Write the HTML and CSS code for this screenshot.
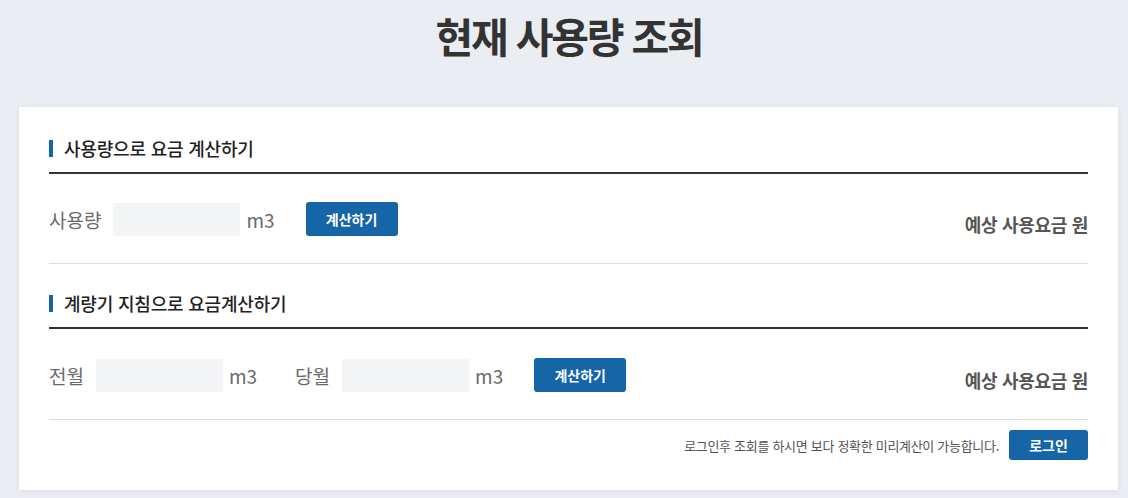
FILE: index.html
```html
<!DOCTYPE html>
<html lang="ko">
<head>
<meta charset="utf-8">
<title>현재 사용량 조회</title>
<link rel="stylesheet" href="styles.css">
</head>
<body>
<h1 class="page-title">현재 사용량 조회</h1>
<div class="card">
  <section class="calc">
    <h2 class="sec-title">사용량으로 요금 계산하기</h2>
    <div class="calc-row">
      <span class="label">사용량</span>
      <span class="field"></span>
      <span class="unit">m3</span>
      <button class="btn">계산하기</button>
      <span class="result">예상 사용요금 원</span>
    </div>
  </section>
  <section class="calc">
    <h2 class="sec-title">계량기 지침으로 요금계산하기</h2>
    <div class="calc-row">
      <span class="label">전월</span>
      <span class="field"></span>
      <span class="unit">m3</span>
      <span class="label label-second">당월</span>
      <span class="field"></span>
      <span class="unit">m3</span>
      <button class="btn">계산하기</button>
      <span class="result">예상 사용요금 원</span>
    </div>
  </section>
  <div class="login-row">
    <span class="login-note">로그인후 조회를 하시면 보다 정확한 미리계산이 가능합니다.</span>
    <button class="btn btn-login">로그인</button>
  </div>
</div>
</body>
</html>
```
FILE: styles.css
```css
html, body {
  margin: 0;
  padding: 0;
}
body {
  background: #eaedf2;
  font-family: "Noto Sans CJK KR", "Noto Sans", sans-serif;
  color: #333;
  width: 1128px;
  height: 498px;
  overflow: hidden;
}
.page-title {
  margin: 0;
  height: 107px;
  box-sizing: border-box;
  padding-top: 8px;
  padding-left: 10px;
  text-align: center;
  font-size: 41px;
  line-height: 54px;
  font-weight: 700;
  color: #333;
  letter-spacing: -2.2px;
}
.card {
  margin-left: 19px;
  width: 1099px;
  box-sizing: border-box;
  background: #fff;
  padding: 28px 30px 30px;
  box-shadow: 0 1px 6px rgba(0, 0, 0, 0.07);
}
.calc {
  border-bottom: 1px solid #dddddd;
}
.calc + .calc {
  padding-top: 26px;
}
.sec-title {
  margin: 0;
  display: flex;
  align-items: center;
  height: 26px;
  font-size: 18px;
  font-weight: 500;
  letter-spacing: -0.2px;
  color: #222;
  padding-bottom: 11px;
  border-bottom: 2px solid #333;
}
.sec-title::before {
  content: "";
  width: 4px;
  height: 17px;
  background: #1565a7;
  margin-right: 11px;
}
.calc-row {
  display: flex;
  align-items: center;
  height: 34px;
  padding: 28px 0 27px;
}
.calc + .calc .calc-row {
  padding-top: 29px;
}
.label {
  font-size: 19px;
  font-weight: 400;
  color: #6a6a6a;
  margin-right: 12px;
}
.label-second {
  margin-left: 38px;
}
.field {
  width: 127px;
  height: 33px;
  background: #f4f5f7;
}
.unit {
  font-size: 19px;
  color: #6a6a6a;
  margin-left: 6px;
}
.btn {
  font-family: inherit;
  border: 0;
  border-radius: 3px;
  background: #1565a7;
  color: #fff;
  font-size: 14px;
  font-weight: 700;
  width: 92px;
  height: 34px;
  padding: 0;
  margin-left: 31px;
}
.result {
  margin-left: auto;
  align-self: flex-end;
  font-size: 18px;
  line-height: 24px;
  font-weight: 700;
  color: #555;
  letter-spacing: -0.3px;
}
.login-row {
  display: flex;
  justify-content: flex-end;
  align-items: center;
  padding-top: 10px;
}
.login-note {
  font-size: 13px;
  letter-spacing: -0.3px;
  color: #555;
  margin-right: 10px;
}
.btn-login {
  width: 79px;
  height: 30px;
  margin-left: 0;
}
```
